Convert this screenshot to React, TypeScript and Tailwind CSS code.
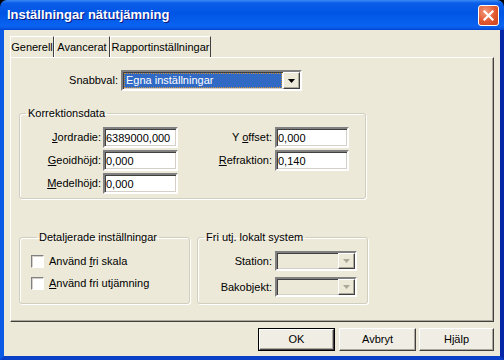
import { ReactNode } from "react";

const raised =
  "border border-t-white border-l-white border-r-[#404040] border-b-[#404040] shadow-[inset_-1px_-1px_0_#ACA899]";
const sunken =
  "border-2 border-t-[#808080] border-l-[#808080] border-r-white border-b-white shadow-[inset_1px_1px_0_#404040,inset_-1px_-1px_0_#D4D0C8]";

function Arrow({ disabled }: { disabled?: boolean }) {
  return (
    <svg width="7" height="4" viewBox="0 0 7 4">
      <path d="M0 0h7L3.5 4z" fill={disabled ? "#ACA899" : "#000"} />
    </svg>
  );
}

function Field({ value }: { value: string }) {
  return (
    <input
      readOnly
      defaultValue={value}
      className={`${sunken} w-full h-[21px] bg-white px-[1px] outline-none`}
    />
  );
}

function Combo({ disabled, children }: { disabled?: boolean; children?: ReactNode }) {
  return (
    <div className={`${sunken} flex h-full ${disabled ? "bg-[#ECE9D8]" : "bg-white"}`}>
      <div className="flex-1 flex items-center p-[1px]">{children}</div>
      <div className={`${raised} w-[17px] flex items-center justify-center bg-[#ECE9D8]`}>
        <Arrow disabled={disabled} />
      </div>
    </div>
  );
}

function Group({ title, className, children }: { title: string; className: string; children: ReactNode }) {
  return (
    <fieldset
      className={`border border-[#D0CEBF] rounded-[3px] shadow-[inset_1px_1px_0_#fff,1px_1px_0_#fff] ${className}`}
    >
      <legend className="ml-[6px] px-[2px] leading-[13px]">{title}</legend>
      {children}
    </fieldset>
  );
}

function Check({ children }: { children: ReactNode }) {
  return (
    <div className="flex items-center gap-[5px] h-[13px]">
      <span className="w-[13px] h-[13px] bg-white border border-t-[#808080] border-l-[#808080] border-r-white border-b-white shadow-[inset_1px_1px_0_#D4D0C8]" />
      <span>{children}</span>
    </div>
  );
}

function Button({ label, def, w }: { label: string; def?: boolean; w: string }) {
  return (
    <div className={`${w} h-[23px] ${def ? "border border-black" : ""}`}>
      <div className={`${raised} h-full flex items-center justify-center bg-[#F0EEE4]`}>{label}</div>
    </div>
  );
}

export default function App() {
  return (
    <div className="w-[504px] h-[360px] bg-black font-['Liberation_Sans',Arial,sans-serif] text-[11px] text-black">
      <div className="w-full h-full flex flex-col rounded-t-[7px] overflow-hidden">
        <div className="h-[30px] shrink-0 flex items-center pl-[7px] pr-[5px] bg-[linear-gradient(180deg,#3C8CF5_0%,#0A5DE8_10%,#0055E5_45%,#0A63F0_85%,#0A5BE8_93%,#0043CF_100%)]">
          <span className="flex-1 text-white font-bold text-[13px] [text-shadow:1px_1px_0_#0A1883]">
            Inställningar nätutjämning
          </span>
          <div className="w-[21px] h-[21px] rounded-[3px] border border-white bg-[radial-gradient(circle_at_35%_30%,#F29B7E_0%,#E2582F_55%,#C8401B_100%)] flex items-center justify-center">
            <svg width="11" height="11" viewBox="0 0 11 11">
              <path d="M1.5 1.5l8 8M9.5 1.5l-8 8" stroke="#fff" strokeWidth="2.2" strokeLinecap="square" />
            </svg>
          </div>
        </div>

        <div className="flex-1 flex flex-col bg-[#ECE9D8] border-l-4 border-r-4 border-b-4 border-l-[#0C5BE6] border-r-[#0626A8] border-b-[#0A3FC8] px-[6px] pt-[6px] pb-[6px]">
          <div className="flex h-[21px]">
            <div className={`${raised} border-b-0 shadow-none w-[44px] flex items-center justify-center`}>Generell</div>
            <div className={`${raised} border-b-0 shadow-none w-[56px] flex items-center justify-center`}>Avancerat</div>
            <div className={`${raised} border-b-0 shadow-none w-[101px] flex items-center justify-center`}>
              Rapportinställningar
            </div>
          </div>

          <div className={`${raised} flex-1 flex flex-col pt-[12px]`}>
            <div className="flex items-center h-[21px]">
              <span className="w-[107px] text-right">Snabbval:</span>
              <div className="ml-[3px] w-[181px] h-[21px]">
                <Combo>
                  <span className="flex-1 h-full flex items-center px-[1px] bg-[#316AC5] text-white border border-dotted border-[#CE953A]">
                    Egna inställningar
                  </span>
                </Combo>
              </div>
            </div>

            <Group title="Korrektionsdata" className="ml-[8px] mt-[16px] w-[347px] h-[92px] pt-[7px]">
              <div className="grid grid-cols-[83px_75px_97px_74px] gap-y-[2px] items-center">
                <span className="text-right pr-[2px]"><u>J</u>ordradie:</span>
                <Field value="6389000,000" />
                <span className="text-right pr-[3px]">Y <u>o</u>ffset:</span>
                <Field value="0,000" />
                <span className="text-right pr-[2px]"><u>G</u>eoidhöjd:</span>
                <Field value="0,000" />
                <span className="text-right pr-[3px]"><u>R</u>efraktion:</span>
                <Field value="0,140" />
                <span className="text-right pr-[2px]"><u>M</u>edelhöjd:</span>
                <Field value="0,000" />
              </div>
            </Group>

            <div className="flex gap-[7px] ml-[8px] mt-[32px]">
              <Group title="Detaljerade inställningar" className="w-[171px] h-[73px] pt-[11px] pl-[11px]">
                <div className="flex flex-col gap-[9px]">
                  <Check>Använd <u>f</u>ri skala</Check>
                  <Check><u>A</u>nvänd fri utjämning</Check>
                </div>
              </Group>
              <Group title="Fri utj. lokalt system" className="w-[171px] h-[73px] pt-[7px]">
                <div className="flex flex-col gap-[6px]">
                  <div className="flex items-center h-[20px]">
                    <span className="w-[77px] text-right pr-[3px]">Station:</span>
                    <div className="w-[82px] h-[20px]"><Combo disabled /></div>
                  </div>
                  <div className="flex items-center h-[20px]">
                    <span className="w-[77px] text-right pr-[3px]">Bakobjekt:</span>
                    <div className="w-[82px] h-[20px]"><Combo disabled /></div>
                  </div>
                </div>
              </Group>
            </div>
          </div>

          <div className="flex justify-end mt-[6px] h-[22px] items-start">
            <Button label="OK" def w="w-[77px]" />
            <div className="w-[4px]" />
            <Button label="Avbryt" w="w-[77px]" />
            <div className="w-[3px]" />
            <Button label="Hjälp" w="w-[75px]" />
          </div>
        </div>
      </div>
    </div>
  );
}
